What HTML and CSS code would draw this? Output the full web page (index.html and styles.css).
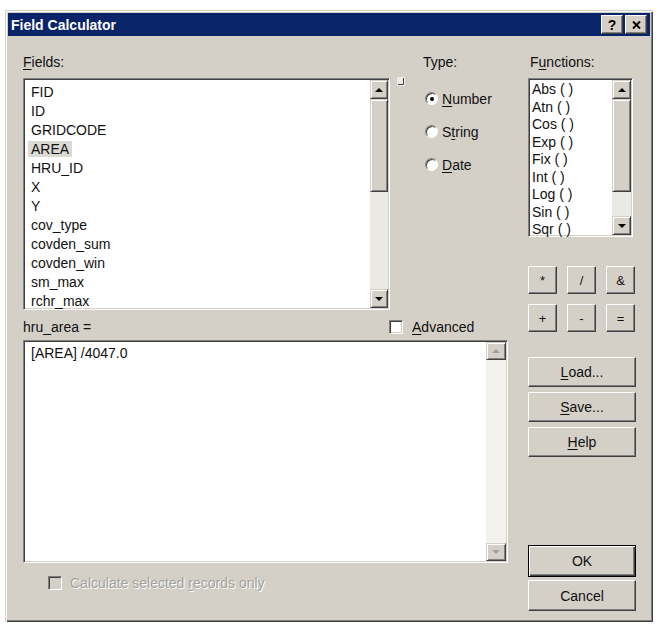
FILE: index.html
```html
<!DOCTYPE html>
<html lang="en">
<head>
    <meta charset="UTF-8">
    <title>Field Calculator</title>
    <link rel="stylesheet" href="styles.css">
</head>
<body>
    <div class="window">
        <div class="titlebar">
            <span class="title">Field Calculator</span>
            <div class="title-btns">
                <span class="tbtn">?</span>
                <span class="tbtn">
                    <svg width="9" height="8" viewBox="0 0 9 8"><path d="M1 0.5 L8 7.5 M8 0.5 L1 7.5" stroke="#000" stroke-width="2"/></svg>
                </span>
            </div>
        </div>

        <div class="content">
            <div class="main">
                <div class="top-row">
                    <div class="fields">
                        <div class="label"><u>F</u>ields:</div>
                        <div class="listbox fields-list">
                            <div class="items">
                                <div>FID</div>
                                <div>ID</div>
                                <div>GRIDCODE</div>
                                <div><span class="sel">AREA</span></div>
                                <div>HRU_ID</div>
                                <div>X</div>
                                <div>Y</div>
                                <div>cov_type</div>
                                <div>covden_sum</div>
                                <div>covden_win</div>
                                <div>sm_max</div>
                                <div>rchr_max</div>
                            </div>
                            <div class="vscroll">
                                <span class="sb-btn"><i class="arr up"></i></span>
                                <span class="thumb fields-thumb"></span>
                                <span class="track"></span>
                                <span class="sb-btn"><i class="arr down"></i></span>
                            </div>
                        </div>
                    </div>

                    <div class="pin">
                        <svg width="8" height="9" viewBox="0 0 8 9">
                            <rect x="0" y="0" width="8" height="9" fill="#ecebe7"/>
                            <path d="M1 7.5 H6.5 V1" stroke="#444" fill="none"/>
                        </svg>
                    </div>

                    <div class="type">
                        <div class="label">Type:</div>
                        <div class="radios">
                            <div class="radio"><span class="rb checked"></span><span><u>N</u>umber</span></div>
                            <div class="radio"><span class="rb"></span><span>S<u>t</u>ring</span></div>
                            <div class="radio"><span class="rb"></span><span><u>D</u>ate</span></div>
                        </div>
                    </div>
                </div>

                <div class="expr-head">
                    <span>hru_area =</span>
                    <div class="check"><span class="cb"></span><span><u>A</u>dvanced</span></div>
                </div>

                <div class="listbox expr">
                    <div class="items expr-text">[AREA] /4047.0</div>
                    <div class="vscroll off">
                        <span class="sb-btn"><i class="arr up"></i></span>
                        <span class="track"></span>
                        <span class="sb-btn"><i class="arr down"></i></span>
                    </div>
                </div>

                <div class="calc">
                    <span class="cb off"></span>
                    <span class="dis">Calculate selected <u>r</u>ecords only</span>
                </div>
            </div>

            <div class="side">
                <div class="label func-label">F<u>u</u>nctions:</div>
                <div class="listbox func-list">
                    <div class="items">
                        <div>Abs ( )</div>
                        <div>Atn ( )</div>
                        <div>Cos ( )</div>
                        <div>Exp ( )</div>
                        <div>Fix ( )</div>
                        <div>Int ( )</div>
                        <div>Log ( )</div>
                        <div>Sin ( )</div>
                        <div>Sqr ( )</div>
                    </div>
                    <div class="vscroll">
                        <span class="sb-btn"><i class="arr up"></i></span>
                        <span class="thumb func-thumb"></span>
                        <span class="track"></span>
                        <span class="sb-btn"><i class="arr down"></i></span>
                    </div>
                </div>

                <div class="ops">
                    <span class="btn">*</span>
                    <span class="btn">/</span>
                    <span class="btn">&amp;</span>
                    <span class="btn">+</span>
                    <span class="btn">-</span>
                    <span class="btn">=</span>
                </div>

                <span class="btn cmd load"><span><u>L</u>oad...</span></span>
                <span class="btn cmd"><span><u>S</u>ave...</span></span>
                <span class="btn cmd"><span><u>H</u>elp</span></span>

                <span class="btn cmd ok">OK</span>
                <span class="btn cmd cancel">Cancel</span>
            </div>
        </div>
    </div>
</body>
</html>
```

FILE: styles.css
```css
body {
    margin: 0;
    background: #fff;
    font-family: "Liberation Sans", Arial, sans-serif;
    font-size: 14px;
    color: #111;
}
u {
    text-decoration-thickness: 1px;
    text-underline-offset: 2px;
}

/* window frame */
.window {
    box-sizing: border-box;
    width: 648px;
    height: 612px;
    margin: 10px 0 0 5px;
    padding: 3px;
    background: #d4d0c8;
    box-shadow: inset 1px 1px #d4d0c8, inset 2px 2px #fff, inset -1px -1px #404040, inset -2px -2px #808080;
    display: flex;
    flex-direction: column;
}
.titlebar {
    height: 23px;
    background: #0a246a;
    display: flex;
    align-items: center;
    justify-content: space-between;
    padding: 0 3px 0 3px;
}
.title {
    color: #fff;
    font-weight: bold;
    font-size: 14px;
}
.title-btns {
    display: flex;
    gap: 2px;
}
.tbtn {
    box-sizing: border-box;
    width: 22px;
    height: 19px;
    background: #d4d0c8;
    border: 1px solid;
    border-color: #fff #404040 #404040 #fff;
    box-shadow: inset -1px -1px #808080;
    display: flex;
    align-items: center;
    justify-content: center;
    font-weight: bold;
    font-size: 14px;
    color: #000;
}

/* layout */
.content {
    display: flex;
    gap: 20px;
    padding: 18px 0 0 15px;
}
.main {
    width: 485px;
    display: flex;
    flex-direction: column;
}
.side {
    width: 108px;
    display: flex;
    flex-direction: column;
}
.label {
    height: 16px;
    line-height: 16px;
    margin-bottom: 8px;
}
.top-row {
    display: flex;
}
.fields {
    width: 367px;
}

/* sunken list boxes */
.listbox {
    box-sizing: border-box;
    display: flex;
    background: #fff;
    border: 1px solid;
    border-color: #808080 #fff #fff #808080;
    box-shadow: inset 1px 1px #404040, inset -1px -1px #d4d0c8;
    padding: 1px;
}
.items {
    flex: 1;
}
.fields-list {
    height: 232px;
}
.fields-list .items {
    padding: 3px 0 0 6px;
    line-height: 19px;
}
.sel {
    background: #dcdad5;
    padding: 0 3px;
    margin-left: -3px;
}

/* scrollbars */
.vscroll {
    width: 18px;
    display: flex;
    flex-direction: column;
}
.sb-btn, .thumb {
    box-sizing: border-box;
    height: 19px;
    background: #d4d0c8;
    border: 1px solid;
    border-color: #d4d0c8 #404040 #404040 #d4d0c8;
    box-shadow: inset 1px 1px #fff, inset -1px -1px #808080;
    display: flex;
    align-items: center;
    justify-content: center;
}
.track {
    flex: 1;
    background: #ebe9e4;
}
.fields-thumb {
    height: 93px;
}
.func-thumb {
    height: 93px;
}
.arr {
    width: 0;
    height: 0;
    border-left: 4px solid transparent;
    border-right: 4px solid transparent;
}
.arr.up {
    border-bottom: 4px solid #000;
}
.arr.down {
    border-top: 4px solid #000;
}
.vscroll.off {
    width: 20px;
}
.vscroll.off .track {
    background: #f3f2ef;
}
.vscroll.off .sb-btn {
    height: 18px;
}
.vscroll.off .arr.up {
    border-bottom-color: #a0a0a0;
}
.vscroll.off .arr.down {
    border-top-color: #a0a0a0;
}

/* pin glyph next to the field list */
.pin {
    margin-left: 7px;
    padding-top: 23px;
    line-height: 0;
}

/* type radios */
.type {
    margin-left: 18px;
}
.radios {
    padding-top: 4px;
}
.radio {
    height: 33px;
    display: flex;
    align-items: center;
    gap: 4px;
    padding-left: 2px;
}
.rb {
    box-sizing: border-box;
    width: 13px;
    height: 13px;
    border-radius: 50%;
    background: #fff;
    border: 1px solid;
    border-color: #808080 #fff #fff #808080;
    box-shadow: inset 1px 1px #404040;
    display: flex;
    align-items: center;
    justify-content: center;
}
.rb.checked::after {
    content: "";
    width: 4px;
    height: 4px;
    border-radius: 50%;
    background: #000;
}

/* checkboxes */
.cb {
    box-sizing: border-box;
    width: 14px;
    height: 14px;
    background: #fff;
    border: 1px solid;
    border-color: #808080 #fff #fff #808080;
    box-shadow: inset 1px 1px #404040, inset -1px -1px #d4d0c8;
}
.cb.off {
    background: #d4d0c8;
}

.expr-head {
    display: grid;
    grid-template-columns: 366px auto;
    height: 18px;
    line-height: 18px;
    margin-top: 8px;
    align-items: center;
}
.check {
    display: flex;
    align-items: center;
    gap: 9px;
}
.expr {
    margin-top: 4px;
    height: 223px;
}
.expr-text {
    padding: 3px 0 0 6px;
    line-height: 17px;
}
.calc {
    margin-top: 13px;
    padding-left: 25px;
    height: 14px;
    display: flex;
    align-items: center;
    gap: 8px;
}
.dis {
    color: #a3a29d;
    text-shadow: 1px 1px #fff;
}

/* functions column */
.func-label {
    padding-left: 2px;
}
.func-list {
    width: 105px;
    height: 159px;
}
.func-list .items {
    padding: 1px 0 0 2px;
    line-height: 17.5px;
}
.func-list .vscroll {
    width: 19px;
}

/* buttons */
.btn {
    box-sizing: border-box;
    background: #d4d0c8;
    border: 1px solid;
    border-color: #fff #404040 #404040 #fff;
    box-shadow: inset -1px -1px #808080;
    display: flex;
    align-items: center;
    justify-content: center;
    color: #111;
}
.ops {
    display: grid;
    grid-template-columns: repeat(3, 29px);
    grid-auto-rows: 28px;
    justify-content: space-between;
    width: 107px;
    row-gap: 10px;
    margin-top: 29px;
}
.ops .btn {
    font-size: 13px;
}
.cmd {
    width: 108px;
    height: 30px;
    margin-top: 5px;
}
.load {
    margin-top: 25px;
}
.ok {
    margin-top: 88px;
    height: 32px;
    border: 1px solid #000;
    box-shadow: inset 1px 1px #fff, inset -1px -1px #404040, inset -2px -2px #808080;
}
.cancel {
    margin-top: 3px;
    height: 31px;
}
```
